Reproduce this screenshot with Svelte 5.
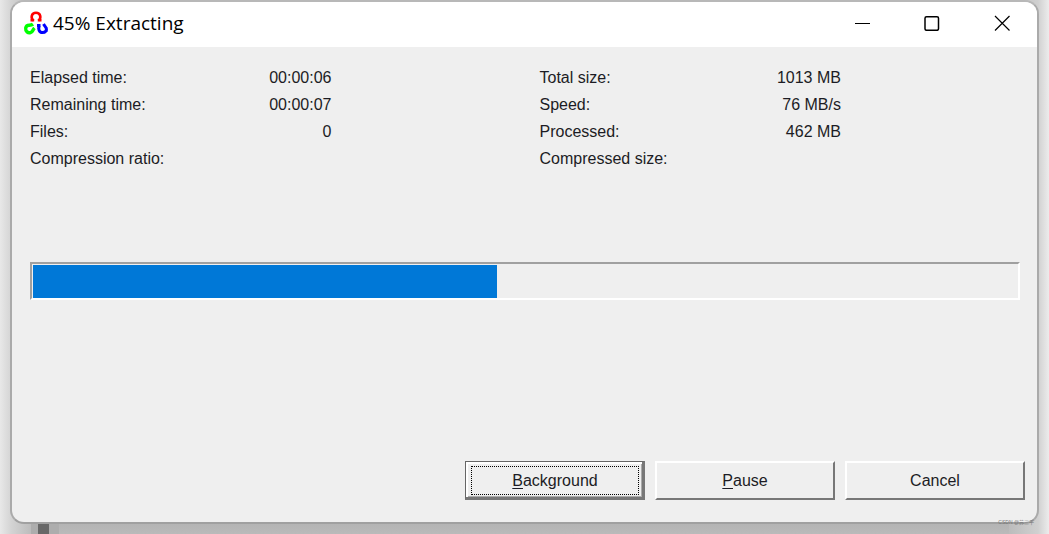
<script>
  const stats = [
    [
      ['Elapsed time:', '00:00:06'],
      ['Remaining time:', '00:00:07'],
      ['Files:', '0'],
      ['Compression ratio:', '']
    ],
    [
      ['Total size:', '1013 MB'],
      ['Speed:', '76 MB/s'],
      ['Processed:', '462 MB'],
      ['Compressed size:', '']
    ]
  ];
  const progress = 47.2;
</script>

<div class="desktop">
  <main class="window">
    <header>
      <svg class="logo" width="26" height="26" viewBox="0 0 26 26" fill="none" stroke-width="3" aria-hidden="true">
        <path d="M7.500 10.200H11.200M14.800 10.200H18.500" stroke="#f00" stroke-width="2.400" />
        <path d="M10.400 10.500C7.300 7.500 8.500 2.800 13 2.800C17.500 2.800 18.700 7.500 15.600 10.500" stroke="#f00" stroke-width="2.600" />
        <path d="M10 14.200C7 16.500 3.500 13.500 2.700 18C2.300 21.500 5 23.300 7.500 22.600C9.800 22 9.500 20 11.500 18" stroke="#0f0" stroke-width="3.400" />
        <path d="M14 15.500H17.500M16.500 15.500C14.800 18.500 16 22.600 19.500 22.600C22.500 22.600 23.800 20.500 23.300 18.500C23 17 22 16.500 20.500 14" stroke="#00f" stroke-width="3" />
        <path d="M23.500 22V17.500" stroke="#00f" stroke-width="2" />
      </svg>
      <h1>45% Extracting</h1>
      <div class="controls">
        <button aria-label="Minimize"><svg width="16" height="16" viewBox="0 0 16 16"><path d="M1 8.500H16" /></svg></button>
        <button aria-label="Maximize"><svg width="16" height="16" viewBox="0 0 16 16"><rect x="1" y="1.800" width="13.500" height="13.500" rx="1.500" stroke-width="1.500" /></svg></button>
        <button aria-label="Close"><svg width="16" height="16" viewBox="0 0 16 16"><path d="M1 1L15.500 15.500M15.500 1L1 15.500" /></svg></button>
      </div>
    </header>

    <section class="stats">
      {#each stats as group}
        <dl>
          {#each group as [label, value]}
            <div class="row"><dt>{label}</dt><dd>{value}</dd></div>
          {/each}
        </dl>
      {/each}
    </section>

    <div class="track" role="progressbar" aria-label="Extracting" aria-valuenow="45" aria-valuemin="0" aria-valuemax="100">
      <div class="bar" style="width: {progress}%"></div>
    </div>

    <footer>
      <button class="action default"><span class="focus"><u>B</u>ackground</span></button>
      <button class="action"><u>P</u>ause</button>
      <button class="action">Cancel</button>
    </footer>
  </main>
  <span class="mark">CSDN @苏三千</span>
</div>

<style>
  :global(body) { margin: 0; }
  .desktop {
    position: relative;
    box-sizing: border-box;
    display: flex;
    min-height: 100vh;
    padding: 0 10px 10px;
    overflow: hidden;
    font-family: "Liberation Sans", Arial, sans-serif;
    color: #1c1c24;
    background:
      linear-gradient(#686868, #686868) 38px 0 / 11px 100% no-repeat,
      linear-gradient(#adadad, #adadad) 31px 0 / 28px 100% no-repeat,
      linear-gradient(90deg, #e8e8e8, #d4d4d4 11px, #bcbcbc 31px, transparent 31px, transparent calc(100% - 40px), #bcbcbc calc(100% - 40px), #d0d0d0 calc(100% - 11px), #ececec),
      linear-gradient(#b4b4b4 calc(100% - 10px), #bababa);
  }
  .window {
    flex: 1;
    display: flex;
    flex-direction: column;
    border: 2px solid #aaa;
    border-top-color: #b8b8b8;
    border-bottom-color: #a0a0a0;
    border-radius: 14px;
    overflow: hidden;
    background: #efefef;
  }
  header {
    display: flex;
    align-items: center;
    height: 42px;
    padding: 0 0 3px 11px;
    background: #fff;
  }
  h1 {
    flex: 1;
    margin: 0 0 0 4px;
    font: 400 19px/26px "Open Sans", "Noto Sans", sans-serif;
    color: #000;
  }
  .controls { display: flex; }
  .controls button {
    display: grid;
    place-items: center;
    width: 70px;
    height: 42px;
    padding: 0;
    border: 0;
    background: none;
  }
  .controls svg { fill: none; stroke: #000; stroke-width: 1.2; }
  .stats {
    display: grid;
    grid-template-columns: 1fr 1fr;
    column-gap: 12px;
    padding: 17px 0 0 18px;
    font-size: 16px;
    line-height: 27px;
  }
  dl { width: 61%; margin: 0; }
  .row { display: flex; justify-content: space-between; }
  dd { margin: 0; padding-right: 2px; }
  .track {
    height: 33px;
    margin: 90px 17px 0 18px;
    padding: 1px 1px 0;
    border: 2px solid #fff;
    border-top-color: #a0a0a0;
    border-left-color: #a0a0a0;
  }
  .bar { height: 100%; background: #0078d7; }
  footer {
    display: flex;
    justify-content: flex-end;
    gap: 10px;
    margin-top: auto;
    padding: 16px 12px 22px;
  }
  .action {
    box-sizing: border-box;
    width: 180px;
    height: 39px;
    padding: 0;
    border: 2px solid #fff;
    border-right-color: #777;
    border-bottom-color: #777;
    font: inherit;
    font-size: 16px;
    color: inherit;
    background: #efefef;
  }
  u { text-underline-offset: 2px; }
  .default {
    padding: 4px 1px 2px 3px;
    border: 1px solid #666;
    border-right: 3px solid #777;
    border-bottom: 3px solid #777;
    box-shadow: inset 2px 2px #fff, inset -1px -1px #aaa;
  }
  .focus {
    box-sizing: border-box;
    display: grid;
    grid-auto-flow: column;
    place-content: center;
    height: 100%;
    margin: 0 2px;
    border: 1px dotted #000;
  }
  .mark {
    position: absolute;
    right: 15px;
    bottom: 8px;
    font: 5px/8px "Liberation Sans", "Noto Sans CJK SC", sans-serif;
    color: #777;
  }
</style>
